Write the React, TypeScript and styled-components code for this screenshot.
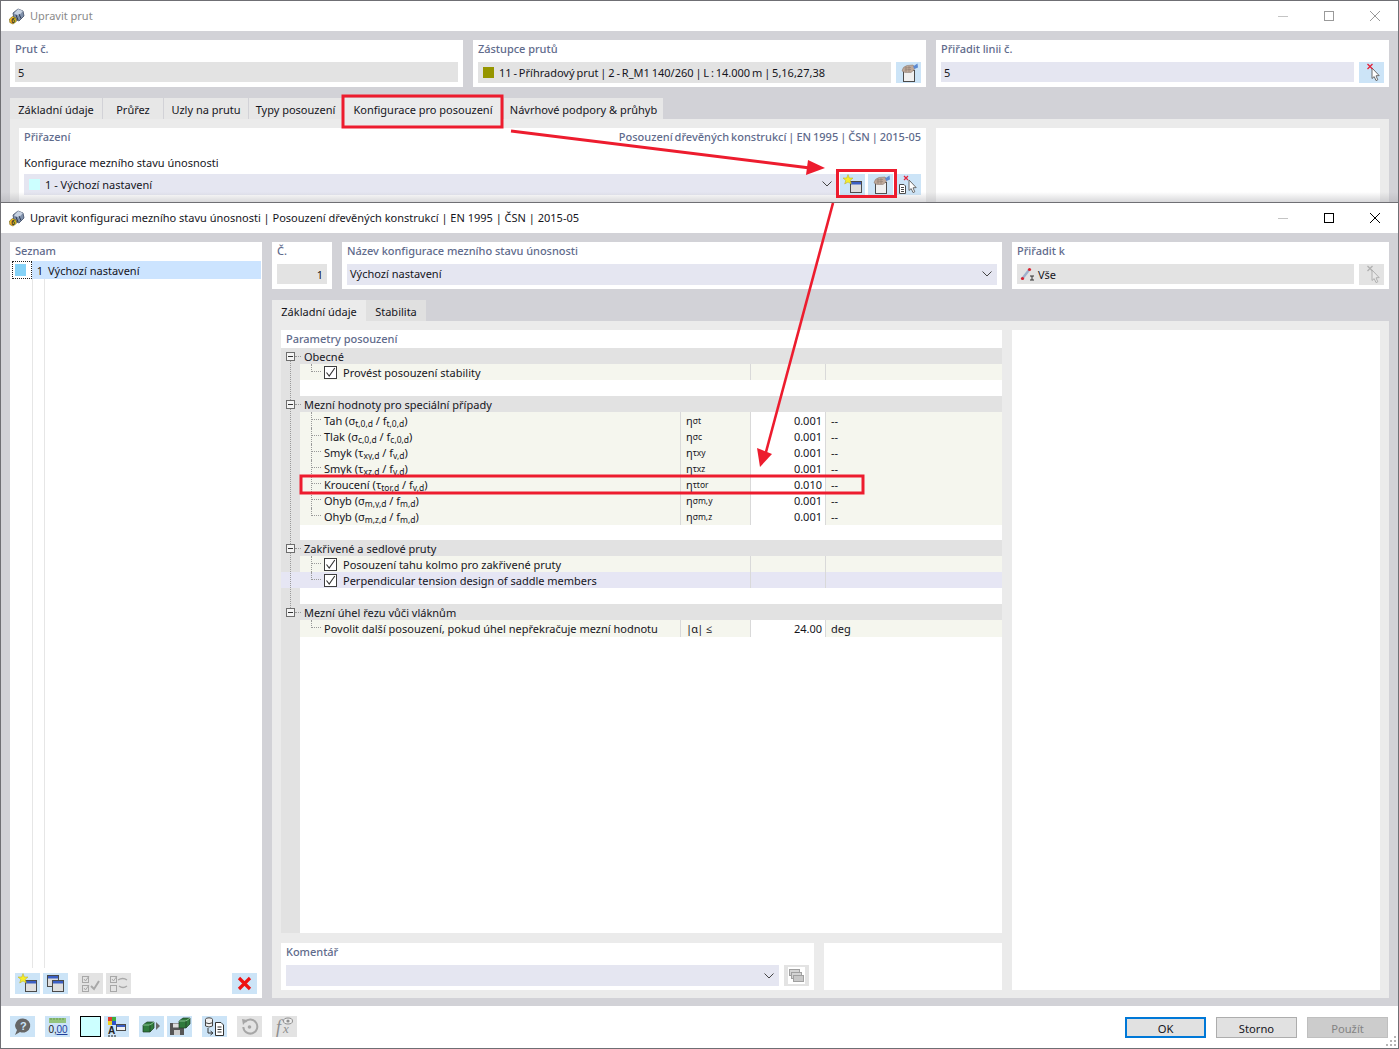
import React from 'react';
import styled, { createGlobalStyle } from 'styled-components';

const GlobalStyle = createGlobalStyle`
  html, body {
    margin: 0;
    padding: 0;
    background: #fff;
  }
  body {
    font-family: "Noto Sans", "Open Sans", "Liberation Sans", sans-serif;
    font-size: 11px;
    color: #15151c;
  }
  * { box-sizing: border-box; }
`;

const Desktop = styled.div`
  position: relative;
  width: 1399px;
  height: 1049px;
  overflow: hidden;
`;

const Window = styled.div<{ $h: number; $bottom?: boolean }>`
  position: relative;
  height: ${p => p.$h}px;
  display: flex;
  flex-direction: column;
  overflow: hidden;
  border: 1px solid #6f6f74;
  border-bottom: ${p => (p.$bottom ? '1px solid #6f6f74' : 'none')};
  background: #d2d2d7;
`;

const BackShade = styled.div`
  position: absolute;
  left: 0;
  right: 0;
  bottom: 0;
  height: 10px;
  background: linear-gradient(rgba(170, 170, 175, 0), rgba(170, 170, 175, 0.45));
`;

const TitleBar = styled.div`
  height: 30px;
  flex: none;
  display: flex;
  align-items: center;
  background: #fff;
  padding-left: 7px;
`;

const TitleText = styled.span<{ $dim?: boolean }>`
  margin-left: 5px;
  margin-top: -1px;
  font-size: 11px;
  color: ${p => (p.$dim ? '#8a8a8a' : '#15151c')};
`;

const WinControls = styled.div`
  margin-left: auto;
  display: flex;
  align-items: center;
`;

const WinControl = styled.div`
  width: 46px;
  height: 30px;
  display: flex;
  align-items: center;
  justify-content: center;
`;

const Body = styled.div`
  flex: 1;
  min-height: 0;
  padding: 9px 9px 8px;
`;

const TopRow = styled.div<{ $cols: string }>`
  display: grid;
  grid-template-columns: ${p => p.$cols};
  gap: 10px;
`;

const Panel = styled.div`
  background: #fff;
  height: 47px;
  padding: 0 5px;
`;

const Label = styled.div`
  height: 22px;
  line-height: 17px;
  color: #5f6b8c;
  font-weight: 500;
  letter-spacing: -0.03px;
`;

const FieldRow = styled.div<{ $gap?: number }>`
  display: flex;
  gap: ${p => p.$gap ?? 5}px;
  align-items: flex-start;
`;

const Field = styled.div<{
  $tone?: 'grey' | 'lav';
  $h?: number;
  $right?: boolean;
  $tight?: boolean;
  $lift?: number;
}>`
  flex: 1;
  min-width: 0;
  height: ${p => p.$h ?? 20}px;
  display: flex;
  align-items: center;
  justify-content: ${p => (p.$right ? 'flex-end' : 'flex-start')};
  padding: 0 ${p => (p.$right ? 4 : 3)}px ${p => p.$lift ?? 0}px;
  background: ${p => (p.$tone === 'lav' ? '#e5e6f1' : '#e3e3e3')};
  white-space: nowrap;
  word-spacing: ${p => (p.$tight ? '-1px' : '0')};
`;

const Swatch = styled.span<{ $c: string }>`
  width: 11px;
  height: 11px;
  flex: none;
  margin: 0 5px 0 2px;
  background: ${p => p.$c};
`;

const Chevron = styled.svg`
  margin-left: auto;
  margin-right: 2px;
  width: 10px;
  height: 6px;
  flex: none;
`;

const IconBtn = styled.div<{ $off?: boolean; $h?: number }>`
  width: 25px;
  height: ${p => p.$h ?? 21}px;
  flex: none;
  display: flex;
  background: ${p => (p.$off ? '#e3e3e3' : '#cce4f7')};
`;

const TabStrip = styled.div<{ $gap?: number }>`
  display: flex;
  height: 21px;
  margin-top: 11px;
  gap: ${p => p.$gap ?? 1}px;
`;

const Tab = styled.div<{ $w: number; $active?: boolean; $dark?: boolean }>`
  width: ${p => p.$w}px;
  display: flex;
  align-items: center;
  justify-content: center;
  padding-top: 1px;
  white-space: nowrap;
  background: ${p => (p.$active ? '#ebebeb' : p.$dark ? '#e0e0e0' : '#e7e7e7')};
`;

const TabBody = styled.div`
  background: #ebebeb;
  padding: 9px 9px 8px;
`;

const BackTabBody = styled(TabBody)`
  display: grid;
  grid-template-columns: 907px 444px;
  gap: 10px;
  height: 90px;
`;

const AssignPanel = styled.div`
  background: #fff;
  height: 80px;
  padding: 0 5px;
`;

const AssignHead = styled.div`
  display: flex;
  justify-content: space-between;
  height: 27px;
  line-height: 18px;
  color: #5f6b8c;
  font-weight: 500;
  word-spacing: -0.9px;
`;

const PlainLabel = styled.div`
  height: 19px;
  line-height: 16px;
`;

const BtnGroup = styled.div`
  display: flex;
  gap: 3px;
`;

const BlankPanel = styled.div`
  background: #fff;
`;

const FrontBody = styled(Body)`
  display: grid;
  grid-template-columns: 252px 1117px;
  gap: 10px;
`;

const ListPanel = styled.div`
  background: #fff;
  display: flex;
  flex-direction: column;
  padding: 0 5px 4px;
`;

const ListTitle = styled(Label)`
  height: 19px;
`;

const ListBody = styled.div`
  position: relative;
  flex: 1;
  margin: 0 0 5px -3px;
  min-height: 0;
  background:
    linear-gradient(#e6e6e6, #e6e6e6) 20px 0 / 1px 100% no-repeat,
    linear-gradient(#e6e6e6, #e6e6e6) 32px 0 / 1px 100% no-repeat;
`;

const ListRow = styled.div`
  display: flex;
  align-items: center;
  height: 18px;
  margin-right: -4px;
  background: linear-gradient(90deg, transparent 20px, #cce4ff 20px);
`;

const ListSwatch = styled.div`
  width: 20px;
  height: 18px;
  padding: 2px 5px 2px 2px;
  border: 1px dotted #222;
  flex: none;
  &::before {
    content: '';
    display: block;
    width: 100%;
    height: 100%;
    background: #85d2f7;
  }
`;

const ListNum = styled.span`
  width: 12px;
  text-align: right;
  flex: none;
  margin-right: 5px;
  margin-left: -1px;
`;

const ListToolbar = styled.div`
  display: flex;
  align-items: center;
`;

const ToolGap = styled.div<{ $w: number }>`
  width: ${p => p.$w}px;
  flex: none;
`;

const RightPane = styled.div`
  display: flex;
  flex-direction: column;
  min-height: 0;
`;

const ContentGrid = styled(TabBody)`
  flex: 1;
  min-height: 0;
  display: grid;
  grid-template-columns: 721px 368px;
  gap: 10px;
`;

const LeftStack = styled.div`
  display: flex;
  flex-direction: column;
  gap: 10px;
  min-height: 0;
`;

const ParamPanel = styled.div`
  flex: 1;
  background: #fff;
  display: flex;
  flex-direction: column;
  min-height: 0;
`;

const ParamTitle = styled(Label)`
  height: 18px;
  flex: none;
  padding-left: 5px;
`;

const Tree = styled.div`
  position: relative;
  flex: 1;
  min-height: 0;
  background: linear-gradient(#e2e2e2, #e2e2e2) 0 0 / 19px 100% no-repeat;
`;

const Spine = styled.div`
  position: absolute;
  left: 9px;
  top: 12px;
  height: 254px;
  border-left: 1px dotted #9a9a9a;
`;

const Row = styled.div<{ $kind: 'group' | 'item' | 'empty' | 'hot' }>`
  height: 16px;
  display: grid;
  grid-template-columns: 19px 380px 70px 75px 177px;
  line-height: 16px;
  white-space: nowrap;
  background: ${p =>
    p.$kind === 'group' ? '#e2e2e2' : p.$kind === 'hot' ? '#e6e6f4' : 'transparent'};
`;

const Gutter = styled.div`
  position: relative;
`;

const ExpandBox = styled.div`
  position: absolute;
  left: 5px;
  top: 4px;
  width: 9px;
  height: 9px;
  background: #f4f4f4;
  border: 1px solid #6e6e6e;
  z-index: 1;
  &::before {
    content: '';
    position: absolute;
    left: 1px;
    right: 1px;
    top: 3px;
    height: 1px;
    background: #333;
  }
  &::after {
    content: '';
    position: absolute;
    left: 8px;
    top: 3px;
    width: 6px;
    border-top: 1px dotted #9a9a9a;
  }
`;

const GroupText = styled.div`
  grid-column: 2 / -1;
  padding-left: 4px;
  line-height: 18px;
`;

const Cell = styled.div<{ $tint?: boolean; $sep?: boolean; $right?: boolean }>`
  position: relative;
  display: flex;
  align-items: center;
  justify-content: ${p => (p.$right ? 'flex-end' : 'flex-start')};
  padding: 1px ${p => (p.$right ? 3 : 0)}px 0 ${p => (p.$right ? 0 : 5)}px;
  background: ${p => (p.$tint ? '#f5f6ee' : 'transparent')};
  border-left: ${p => (p.$sep ? '1px solid #d9d9d9' : 'none')};
`;

const Name = styled(Cell)`
  padding-left: 24px;
  display: block;
  line-height: 16px;
`;

const Branch = styled.span<{ $last?: boolean }>`
  position: absolute;
  left: 11px;
  top: 0;
  width: 9px;
  height: ${p => (p.$last ? 8 : 16)}px;
  border-left: 1px dotted #9a9a9a;
  &::after {
    content: '';
    position: absolute;
    left: 0;
    top: 7px;
    width: 9px;
    border-top: 1px dotted #9a9a9a;
  }
`;

const CheckLine = styled.span`
  display: flex;
  align-items: center;
  height: 15px;
  gap: 6px;
`;

const CheckBox = styled.span`
  width: 13px;
  height: 13px;
  flex: none;
  background: #fff;
  border: 1px solid #3c3c3c;
  display: flex;
  align-items: center;
  justify-content: center;
`;

const Sub = styled.sub`
  font-size: 8.5px;
  line-height: 0;
  vertical-align: -2px;
`;

const AbsSymbol = styled.span`
  letter-spacing: -0.8px;
  word-spacing: 1px;
`;

const BottomRow = styled.div`
  display: grid;
  grid-template-columns: 533px 178px;
  gap: 10px;
`;

const Footer = styled.div`
  position: relative;
  height: 42px;
  flex: none;
  background: #fff;
  display: flex;
  align-items: flex-start;
  padding: 10px 10px 0 9px;
  gap: 10px;
`;

const ColorWell = styled.div`
  width: 21px;
  height: 21px;
  background: #ccffff;
  border: 1px solid #000;
`;

const DialogBtn = styled.div<{ $variant?: 'primary' | 'off' }>`
  width: 81px;
  height: 21px;
  display: flex;
  align-items: center;
  justify-content: center;
  padding-top: 1px;
  font-size: 11.2px;
  background: ${p => (p.$variant === 'off' ? '#cccccc' : '#e1e1e1')};
  border: ${p =>
    p.$variant === 'primary'
      ? '2px solid #0078d7'
      : p.$variant === 'off'
        ? '1px solid #bfbfbf'
        : '1px solid #adadad'};
  color: ${p => (p.$variant === 'off' ? '#838383' : '#15151c')};
`;

const DialogBtns = styled.div`
  margin-left: auto;
  margin-top: 1px;
  display: flex;
  gap: 10px;
`;

const Grip = styled.svg`
  position: absolute;
  right: 1px;
  bottom: 1px;
`;

const Overlay = styled.svg`
  position: absolute;
  left: 0;
  top: 0;
  pointer-events: none;
`;

/* ---------- icons ---------- */

const Ico = styled.svg`
  width: 25px;
  height: 21px;
  display: block;
`;

const MemberGlyph = styled.svg`
  flex: none;
  margin-right: 2px;
`;

const AppIcon = () => (
  <svg width="17" height="17" viewBox="0 0 17 17">
    <path d="M5 5 L10 1 L15 3 L16 8 L11 13 L6 11 Z" fill="#7f90ab" stroke="#3d4a63" strokeWidth="0.8" />
    <path d="M10 1 L15 3 L11 7.5 L6 5.5 Z" fill="#c7d2e2" />
    <path d="M8 7 L10 12 M11 6 L13 10.5" stroke="#2d3850" strokeWidth="1" />
    <path d="M1.5 11 L4.5 8.5 L8 10 L8.3 13.5 L5 16 L1.8 14.5 Z" fill="#f0c020" stroke="#6d5a10" strokeWidth="0.6" />
    <text x="3.2" y="14.8" fontSize="6.5" fontWeight="700" fontFamily="Liberation Sans" fill="#333">6</text>
  </svg>
);

const MiniWindow = ({ x, y, w = 11, h = 11 }: { x: number; y: number; w?: number; h?: number }) => (
  <g>
    <rect x={x + 0.5} y={y + 0.5} width={w} height={h} fill="#dedede" stroke="#4a4a4a" />
    <rect x={x + 1} y={y + 1} width={w - 1} height="2.5" fill="#3b5fc4" />
  </g>
);

const NewWindowIcon = () => (
  <Ico viewBox="0 0 25 21">
    <MiniWindow x={10} y={7} w={11} h={11} />
    <polygon points="8,0.5 9.3,4 13,4 10.2,6.4 11.3,10 8,8 4.7,10 5.8,6.4 3,4 6.7,4" fill="#f6ee2c" stroke="#b9a818" strokeWidth="0.5" />
  </Ico>
);

const EditWindowIcon = () => (
  <Ico viewBox="0 0 25 21">
    <rect x="7.5" y="8.5" width="11" height="11" fill="#f0f0f0" stroke="#4a4a4a" />
    <path d="M6 9 Q6.5 4.5 11 3.5 L17 3 Q20 5 18 8 L15 10.5 L9 10.5 Z" fill="#bfa99a" stroke="#85746a" strokeWidth="0.5" />
    <path d="M17 4.5 L21.5 1.5 L22 5.5 L18.5 7 Z" fill="#5c8ad2" />
    <path d="M8.5 6 L15 5.5 M8.5 8 L15 7.5 M10 4.5 L10 10 M13 4 L13 10" stroke="#85746a" strokeWidth="0.5" />
  </Ico>
);

const Cursor = ({ c = '#fff', s = '#6a6a6a' }: { c?: string; s?: string }) => (
  <path d="M13 6 L13 16.5 L15.2 14.6 L17 18.6 L18.8 17.8 L17 13.8 L20.2 13.6 Z" fill={c} stroke={s} strokeWidth="1" />
);

const PickIcon = ({ off }: { off?: boolean }) => (
  <Ico viewBox="0 0 25 21">
    <Cursor c={off ? '#e8e8e8' : '#fff'} s={off ? '#b0b0b0' : '#6a6a6a'} />
    <path d="M8.5 2 L13.5 7 M13.5 2 L8.5 7" stroke={off ? '#b0b0b0' : '#e2233a'} strokeWidth="1.3" />
  </Ico>
);

const PickDocIcon = () => (
  <Ico viewBox="0 0 25 21">
    <Cursor />
    <path d="M8 2 L12 6 M12 2 L8 6" stroke="#e2233a" strokeWidth="1.2" />
    <path d="M3.5 10.5 H8 L9.5 12 V19.5 H3.5 Z" fill="#fff" stroke="#4a4a4a" />
    <path d="M5 13.5 H8 M5 15.5 H8 M5 17.5 H8" stroke="#4a4a4a" />
  </Ico>
);

const CopyIcon = () => (
  <Ico viewBox="0 0 25 21">
    <MiniWindow x={4} y={2} />
    <MiniWindow x={9} y={7} />
  </Ico>
);

const CheckAllIcon = () => (
  <Ico viewBox="0 0 25 21" fill="none" stroke="#a8a8a8">
    <rect x="4.5" y="3.5" width="6" height="6" />
    <rect x="4.5" y="12.5" width="6" height="6" />
    <path d="M6 6 L7.5 8 L11 3 M6 15 L7.5 17 L11 12" />
    <path d="M13 13 L16 16 L21 8" strokeWidth="2" />
  </Ico>
);

const CheckSwapIcon = () => (
  <Ico viewBox="0 0 25 21" fill="none" stroke="#a8a8a8">
    <rect x="4.5" y="3.5" width="6" height="6" />
    <rect x="4.5" y="12.5" width="6" height="6" />
    <path d="M6 6 L7.5 8 L11 3" />
    <path d="M12 7 Q17 4 21 7 M21 13 Q17 16 13 13" strokeWidth="1.4" />
  </Ico>
);

const DeleteIcon = () => (
  <Ico viewBox="0 0 25 21">
    <path d="M7 5 L18 16 M18 5 L7 16" stroke="#ee1111" strokeWidth="3.2" />
  </Ico>
);

const HelpIcon = () => (
  <Ico viewBox="0 0 25 21">
    <path d="M13 2.5 A7.5 7 0 1 1 10 16 L5 19 L7 14 A7.5 7 0 0 1 13 2.5 Z" fill="#666" />
    <text x="10" y="14" fontSize="11" fontWeight="700" fontFamily="Liberation Sans" fill="#cce4f7">?</text>
  </Ico>
);

const DecimalsIcon = () => (
  <Ico viewBox="0 0 25 21">
    <rect x="4" y="2" width="17" height="5" fill="#93c47d" />
    <path d="M6 2 V4 M9 2 V4 M12 2 V4 M15 2 V4 M18 2 V4" stroke="#6a9a55" />
    <text x="3.5" y="16.5" fontSize="10" fontFamily="Liberation Sans" fill="#222">0,</text>
    <text x="11.5" y="16.5" fontSize="10" fontFamily="Liberation Sans" fill="#1e3f9c">00</text>
    <path d="M11.5 18.5 H22.5" stroke="#1e3f9c" />
  </Ico>
);

const ColorsIcon = () => (
  <Ico viewBox="0 0 25 21">
    <rect x="4" y="1" width="4" height="4" fill="#e23b2e" />
    <rect x="8" y="1" width="4" height="4" fill="#3fae3c" />
    <rect x="4" y="5" width="4" height="4" fill="#f0d020" />
    <rect x="8" y="5" width="4" height="4" fill="#2f53c8" />
    <text x="4" y="18" fontSize="10" fontWeight="700" fontFamily="Liberation Sans" fill="#222">A</text>
    <path d="M4 20 H12" stroke="#222" strokeDasharray="2 1" />
    <rect x="12.5" y="8.5" width="9" height="6" fill="#eee" stroke="#4a4a4a" />
    <rect x="13" y="9" width="8" height="2" fill="#3b5fc4" />
  </Ico>
);

const GreenBox = ({ x = 0, y = 0 }: { x?: number; y?: number }) => (
  <g transform={`translate(${x} ${y})`}>
    <path d="M0 6 L4 3 L11 3 L11 9 L7 13 L0 13 Z" fill="#2f7a3c" stroke="#1e3d24" strokeWidth="0.7" />
    <path d="M0 6 L7 6 L11 3" fill="none" stroke="#9fd5a8" strokeWidth="0.8" />
    <path d="M7 6 V13" stroke="#1e3d24" strokeWidth="0.8" />
  </g>
);

const ExportIcon = () => (
  <Ico viewBox="0 0 25 21">
    <GreenBox x={4} y={3} />
    <polygon points="17,6 21,10 17,14" fill="#6a6a6a" />
  </Ico>
);

const SaveBoxIcon = () => (
  <Ico viewBox="0 0 25 21">
    <path d="M3 7 H15 L17 9 V19 H3 Z" fill="#555" />
    <rect x="6" y="7.5" width="7" height="4" fill="#ddd" />
    <rect x="7" y="14" width="6" height="5" fill="#ccc" />
    <GreenBox x={12} y={-1} />
  </Ico>
);

const DbDocIcon = () => (
  <Ico viewBox="0 0 25 21">
    <g fill="#f2f2f2" stroke="#444">
      <ellipse cx="7" cy="3.5" rx="3.5" ry="1.7" />
      <path d="M3.5 3.5 V10 Q7 12 10.5 10 V3.5" />
      <path d="M3.5 6.7 Q7 8.7 10.5 6.7" fill="none" />
    </g>
    <path d="M6 12 V17 H10 M8.5 15 L11 17 L8.5 19" fill="none" stroke="#333" />
    <path d="M13.5 6.5 H19 L21.5 9 V19.5 H13.5 Z" fill="#fff" stroke="#333" />
    <path d="M15.5 11 H19.5 M15.5 13.5 H19.5 M15.5 16 H19.5" stroke="#333" />
  </Ico>
);

const UndoIcon = () => (
  <Ico viewBox="0 0 25 21" fill="none" stroke="#a6a6a6">
    <path d="M8 6 A7 7 0 1 1 6.3 11" strokeWidth="2" />
    <polygon points="5,3 10,4 6,9" fill="#a6a6a6" stroke="none" />
    <circle cx="12.5" cy="11" r="1.8" fill="#a6a6a6" stroke="none" />
  </Ico>
);

const FormulaIcon = () => (
  <Ico viewBox="0 0 25 21">
    <text x="4" y="17" fontSize="18" fontStyle="italic" fontFamily="Liberation Serif" fill="#8e8e8e">f</text>
    <text x="11" y="17" fontSize="13" fontStyle="italic" fontFamily="Liberation Serif" fill="#8e8e8e">x</text>
    <ellipse cx="16" cy="5" rx="4.5" ry="3" fill="#eee" stroke="#8e8e8e" />
    <circle cx="16" cy="5" r="1.6" fill="#8e8e8e" />
  </Ico>
);

const CommentCopyIcon = () => (
  <Ico viewBox="0 0 25 21">
    <rect x="4" y="2" width="17" height="17" fill="#fff" />
    <rect x="5.5" y="4.5" width="10" height="6" fill="#d4d4d4" stroke="#a0a0a0" />
    <rect x="7.5" y="7.5" width="10" height="6" fill="#d4d4d4" stroke="#a0a0a0" />
    <rect x="9.5" y="10.5" width="10" height="6" fill="#c8c8c8" stroke="#a0a0a0" />
  </Ico>
);

const MemberTypeIcon = () => (
  <MemberGlyph width="16" height="14" viewBox="0 0 16 14">
    <path d="M2 12 L9 3" stroke="#9fb1cc" strokeWidth="2.4" />
    <circle cx="2.5" cy="11.5" r="1.6" fill="#d8212f" />
    <circle cx="9.5" cy="2.5" r="1.6" fill="#d8212f" />
    <path d="M10 9 H14 M12 9 V13 M10 13 H14" stroke="#333" />
  </MemberGlyph>
);

const ChevronDown = () => (
  <Chevron viewBox="0 0 10 6" fill="none" stroke="#444">
    <path d="M0.5 0.5 L5 5 L9.5 0.5" />
  </Chevron>
);

const Tick = () => (
  <svg width="11" height="11" viewBox="0 0 11 11" fill="none" stroke="#333" strokeWidth="1.1">
    <path d="M1.5 5.5 L4.2 9 L9.8 1" />
  </svg>
);

const Controls = ({ dim }: { dim?: boolean }) => {
  const c = dim ? '#9a9a9a' : '#000';
  return (
    <WinControls>
      <WinControl>
        <svg width="10" height="10"><path d="M0 5.5 H10" stroke="#c4c4c4" /></svg>
      </WinControl>
      <WinControl>
        <svg width="10" height="10"><rect x="0.5" y="0.5" width="9" height="9" fill="none" stroke={c} /></svg>
      </WinControl>
      <WinControl>
        <svg width="10" height="10"><path d="M0 0 L10 10 M10 0 L0 10" stroke={c} /></svg>
      </WinControl>
    </WinControls>
  );
};

/* ---------- tree data ---------- */

const formula = (sym: string, a: string, b: string) => (
  <>
    ({sym}<Sub>{a}</Sub> / f<Sub>{b}</Sub>)
  </>
);

const limits = [
  { name: 'Tah', f: formula('σ', 't,0,d', 't,0,d'), eta: 'σt', v: '0.001' },
  { name: 'Tlak', f: formula('σ', 'c,0,d', 'c,0,d'), eta: 'σc', v: '0.001' },
  { name: 'Smyk', f: formula('τ', 'xy,d', 'v,d'), eta: 'τxy', v: '0.001' },
  { name: 'Smyk', f: formula('τ', 'xz,d', 'v,d'), eta: 'τxz', v: '0.001' },
  { name: 'Kroucení', f: formula('τ', 'tor,d', 'v,d'), eta: 'τtor', v: '0.010' },
  { name: 'Ohyb', f: formula('σ', 'm,y,d', 'm,d'), eta: 'σm,y', v: '0.001' },
  { name: 'Ohyb', f: formula('σ', 'm,z,d', 'm,d'), eta: 'σm,z', v: '0.001' },
];

const GroupRow = ({ text }: { text: string }) => (
  <Row $kind="group">
    <Gutter><ExpandBox /></Gutter>
    <GroupText>{text}</GroupText>
  </Row>
);

const EmptyRow = () => (
  <Row $kind="empty"><Gutter /></Row>
);

const CheckRow = ({ text, last, hot }: { text: string; last?: boolean; hot?: boolean }) => (
  <Row $kind={hot ? 'hot' : 'item'}>
    <Gutter />
    <Name $tint={!hot}>
      <Branch $last={last} />
      <CheckLine><CheckBox><Tick /></CheckBox>{text}</CheckLine>
    </Name>
    <Cell $tint={!hot} />
    <Cell $tint={!hot} $sep />
    <Cell $tint={!hot} $sep />
  </Row>
);

const ValueRow = ({ name, eta, value, unit, last }: {
  name: React.ReactNode; eta: React.ReactNode; value: string; unit: string; last?: boolean;
}) => (
  <Row $kind="item">
    <Gutter />
    <Name $tint>
      <Branch $last={last} />
      {name}
    </Name>
    <Cell $tint $sep>{eta}</Cell>
    <Cell $sep $right>{value}</Cell>
    <Cell $tint $sep>{unit}</Cell>
  </Row>
);

export default function App() {
  return (
    <Desktop>
      <GlobalStyle />

      <Window $h={202}>
        <TitleBar>
          <AppIcon />
          <TitleText $dim>Upravit prut</TitleText>
          <Controls dim />
        </TitleBar>
        <Body>
          <TopRow $cols="453px 453px 453px">
            <Panel>
              <Label>Prut č.</Label>
              <Field>5</Field>
            </Panel>
            <Panel>
              <Label>Zástupce prutů</Label>
              <FieldRow>
                <Field $h={21} $lift={1} $tight>
                  <Swatch $c="#969600" />
                  11 - Příhradový prut | 2 - R_M1 140/260 | L : 14.000 m | 5,16,27,38
                </Field>
                <IconBtn><EditWindowIcon /></IconBtn>
              </FieldRow>
            </Panel>
            <Panel>
              <Label>Přiřadit linii č.</Label>
              <FieldRow>
                <Field $tone="lav">5</Field>
                <IconBtn><PickIcon /></IconBtn>
              </FieldRow>
            </Panel>
          </TopRow>
          <TabStrip>
            <Tab $w={92}>Základní údaje</Tab>
            <Tab $w={60}>Průřez</Tab>
            <Tab $w={84}>Uzly na prutu</Tab>
            <Tab $w={93}>Typy posouzení</Tab>
            <Tab $w={160} $active>Konfigurace pro posouzení</Tab>
            <Tab $w={159}>Návrhové podpory &amp; průhyb</Tab>
          </TabStrip>
          <BackTabBody>
            <AssignPanel>
              <AssignHead>
                <span>Přiřazení</span>
                <span>Posouzení dřevěných konstrukcí | EN 1995 | ČSN | 2015-05</span>
              </AssignHead>
              <PlainLabel>Konfigurace mezního stavu únosnosti</PlainLabel>
              <FieldRow $gap={3}>
                <Field $tone="lav" $h={21} $lift={1}>
                  <Swatch $c="#ccffff" />
                  1 - Výchozí nastavení
                  <ChevronDown />
                </Field>
                <BtnGroup>
                  <IconBtn><NewWindowIcon /></IconBtn>
                  <IconBtn><EditWindowIcon /></IconBtn>
                  <IconBtn><PickDocIcon /></IconBtn>
                </BtnGroup>
              </FieldRow>
            </AssignPanel>
            <BlankPanel />
          </BackTabBody>
        </Body>
        <BackShade />
      </Window>

      <Window $h={847} $bottom>
        <TitleBar>
          <AppIcon />
          <TitleText>Upravit konfiguraci mezního stavu únosnosti | Posouzení dřevěných konstrukcí | EN 1995 | ČSN | 2015-05</TitleText>
          <Controls />
        </TitleBar>
        <FrontBody>
          <ListPanel>
            <ListTitle>Seznam</ListTitle>
            <ListBody>
              <ListRow>
                <ListSwatch />
                <ListNum>1</ListNum>
                Výchozí nastavení
              </ListRow>
            </ListBody>
            <ListToolbar>
              <IconBtn><NewWindowIcon /></IconBtn>
              <ToolGap $w={3} />
              <IconBtn><CopyIcon /></IconBtn>
              <ToolGap $w={10} />
              <IconBtn $off><CheckAllIcon /></IconBtn>
              <ToolGap $w={3} />
              <IconBtn $off><CheckSwapIcon /></IconBtn>
              <ToolGap $w={101} />
              <IconBtn><DeleteIcon /></IconBtn>
            </ListToolbar>
          </ListPanel>

          <RightPane>
            <TopRow $cols="60px 660px 377px">
              <Panel>
                <Label>Č.</Label>
                <Field $right>1</Field>
              </Panel>
              <Panel>
                <Label>Název konfigurace mezního stavu únosnosti</Label>
                <Field $tone="lav" $h={21} $lift={2}>
                  Výchozí nastavení
                  <ChevronDown />
                </Field>
              </Panel>
              <Panel>
                <Label>Přiřadit k</Label>
                <FieldRow>
                  <Field>
                    <MemberTypeIcon />
                    Vše
                  </Field>
                  <IconBtn $off><PickIcon off /></IconBtn>
                </FieldRow>
              </Panel>
            </TopRow>

            <TabStrip $gap={0}>
              <Tab $w={94} $active>Základní údaje</Tab>
              <Tab $w={60} $dark>Stabilita</Tab>
            </TabStrip>

            <ContentGrid>
              <LeftStack>
                <ParamPanel>
                  <ParamTitle>Parametry posouzení</ParamTitle>
                  <Tree>
                    <Spine />
                    <GroupRow text="Obecné" />
                    <CheckRow text="Provést posouzení stability" last />
                    <EmptyRow />
                    <GroupRow text="Mezní hodnoty pro speciální případy" />
                    {limits.map((r, i) => (
                      <ValueRow
                        key={i}
                        name={<>{r.name} {r.f}</>}
                        eta={<>η<Sub>{r.eta}</Sub></>}
                        value={r.v}
                        unit="--"
                        last={i === limits.length - 1}
                      />
                    ))}
                    <EmptyRow />
                    <GroupRow text="Zakřivené a sedlové pruty" />
                    <CheckRow text="Posouzení tahu kolmo pro zakřivené pruty" />
                    <CheckRow text="Perpendicular tension design of saddle members" last hot />
                    <EmptyRow />
                    <GroupRow text="Mezní úhel řezu vůči vláknům" />
                    <ValueRow
                      name="Povolit další posouzení, pokud úhel nepřekračuje mezní hodnotu"
                      eta={<AbsSymbol>|α| ≤</AbsSymbol>}
                      value="24.00"
                      unit="deg"
                      last
                    />
                  </Tree>
                </ParamPanel>
                <BottomRow>
                  <Panel>
                    <Label>Komentář</Label>
                    <FieldRow>
                      <Field $tone="lav" $h={21}>
                        <ChevronDown />
                      </Field>
                      <IconBtn $off><CommentCopyIcon /></IconBtn>
                    </FieldRow>
                  </Panel>
                  <BlankPanel />
                </BottomRow>
              </LeftStack>
              <BlankPanel />
            </ContentGrid>
          </RightPane>
        </FrontBody>

        <Footer>
          <IconBtn><HelpIcon /></IconBtn>
          <IconBtn><DecimalsIcon /></IconBtn>
          <BtnGroup>
            <ColorWell />
            <IconBtn><ColorsIcon /></IconBtn>
          </BtnGroup>
          <BtnGroup>
            <IconBtn><ExportIcon /></IconBtn>
            <IconBtn><SaveBoxIcon /></IconBtn>
          </BtnGroup>
          <IconBtn><DbDocIcon /></IconBtn>
          <IconBtn $off><UndoIcon /></IconBtn>
          <IconBtn $off><FormulaIcon /></IconBtn>
          <DialogBtns>
            <DialogBtn $variant="primary">OK</DialogBtn>
            <DialogBtn>Storno</DialogBtn>
            <DialogBtn $variant="off">Použít</DialogBtn>
          </DialogBtns>
          <Grip width="11" height="11" viewBox="0 0 11 11" fill="#b5b5b5">
            <rect x="8" y="0" width="2" height="2" />
            <rect x="4" y="4" width="2" height="2" />
            <rect x="8" y="4" width="2" height="2" />
            <rect x="0" y="8" width="2" height="2" />
            <rect x="4" y="8" width="2" height="2" />
            <rect x="8" y="8" width="2" height="2" />
          </Grip>
        </Footer>
      </Window>

      <Overlay width="1399" height="1049" viewBox="0 0 1399 1049">
        <g fill="none" stroke="#ed1c2e" strokeWidth="3">
          <rect x="343" y="96" width="159" height="31" />
          <rect x="837.5" y="170.5" width="58" height="26" />
          <rect x="301" y="476" width="562" height="17" />
          <path d="M511 131 L810 168" />
          <path d="M833 203 L766 452" strokeWidth="2.6" />
        </g>
        <g fill="#ed1c2e">
          <polygon points="825,168 808,160 806,175" />
          <polygon points="760,467 757,448 772,454" />
        </g>
      </Overlay>
    </Desktop>
  );
}
